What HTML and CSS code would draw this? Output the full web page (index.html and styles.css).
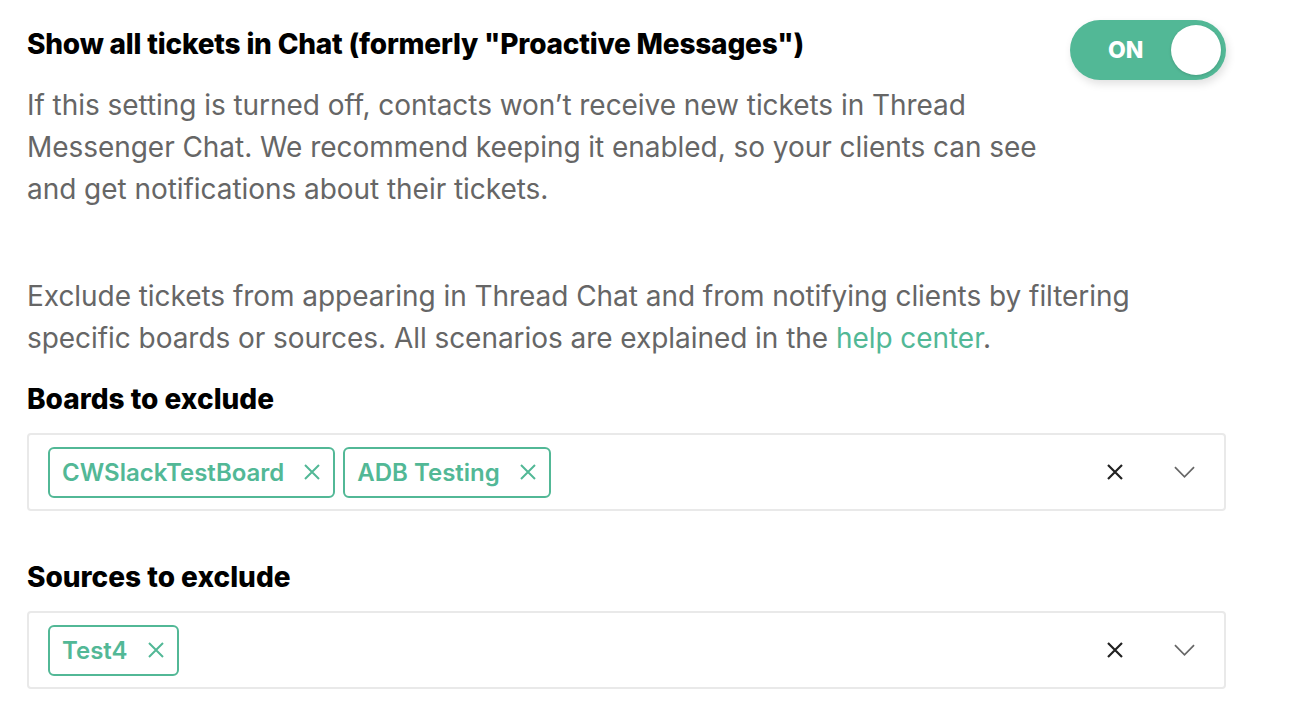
FILE: index.html
```html
<!DOCTYPE html>
<html lang="en">
<head>
    <meta charset="UTF-8" />
    <title>Chat settings</title>
    <link rel="stylesheet" href="styles.css">
</head>
<body>

<main class="settings">

    <!-- ===== Toggle row ===== -->
    <section class="setting-row">
        <div class="setting-text">
            <h3 class="setting-title">Show all tickets in Chat (formerly "Proactive Messages")</h3>
            <p class="setting-desc">If this setting is turned off, contacts won’t receive new tickets in Thread Messenger Chat. We recommend keeping it enabled, so your clients can see and get notifications about their tickets.</p>
        </div>
        <button class="toggle is-on" aria-pressed="true">
            <span class="toggle-label">ON</span>
            <span class="toggle-knob"></span>
        </button>
    </section>

    <!-- ===== Filters ===== -->
    <p class="setting-desc filter-intro">Exclude tickets from appearing in Thread Chat and from notifying clients by filtering specific boards or sources. All scenarios are explained in the <a href="#" class="link">help center</a>.</p>

    <div class="field">
        <label class="field-label">Boards to exclude</label>
        <div class="multi-select">
            <div class="tags">
                <span class="tag">CWSlackTestBoard
                    <svg class="tag-x" viewBox="0 0 18 18"><path d="M2 2 L16 16 M16 2 L2 16"/></svg>
                </span>
                <span class="tag">ADB Testing
                    <svg class="tag-x" viewBox="0 0 18 18"><path d="M2 2 L16 16 M16 2 L2 16"/></svg>
                </span>
            </div>
            <div class="select-actions">
                <svg class="clear-x" viewBox="0 0 18 18"><path d="M2 2 L16 16 M16 2 L2 16"/></svg>
                <svg class="chevron" viewBox="0 0 22 12"><path d="M1 1 L11 11 L21 1"/></svg>
            </div>
        </div>
    </div>

    <div class="field">
        <label class="field-label">Sources to exclude</label>
        <div class="multi-select">
            <div class="tags">
                <span class="tag">Test4
                    <svg class="tag-x" viewBox="0 0 18 18"><path d="M2 2 L16 16 M16 2 L2 16"/></svg>
                </span>
            </div>
            <div class="select-actions">
                <svg class="clear-x" viewBox="0 0 18 18"><path d="M2 2 L16 16 M16 2 L2 16"/></svg>
                <svg class="chevron" viewBox="0 0 22 12"><path d="M1 1 L11 11 L21 1"/></svg>
            </div>
        </div>
    </div>

</main>

</body>
</html>
```

FILE: styles.css
```css
:root {
    --green: #52b896;
    --text: #666;
    --border: #e9e9e9;
}
* { box-sizing: border-box; }

body {
    margin: 0;
    background: #fff;
    font-family: Inter, "Noto Sans", sans-serif;
    color: #000;
}

.settings {
    width: 1199px;
    margin-left: 27px;
    padding-top: 26px;
}

/* ────────── Toggle row ────────── */
.setting-row {
    display: flex;
    justify-content: space-between;
    align-items: flex-start;
}
.setting-text {
    width: 1043px;
}
.setting-title {
    margin: 0;
    font-size: 28px;
    line-height: 36px;
    font-weight: 800;
    letter-spacing: -0.2px;
}
.setting-desc {
    margin: 22px 0 0;
    font-size: 28px;
    line-height: 42px;
    color: var(--text);
    letter-spacing: -0.05px;
}
.link {
    color: var(--green);
    text-decoration: none;
}

.toggle {
    position: relative;
    margin-top: -6px;
    width: 156px;
    height: 60px;
    border: none;
    border-radius: 30px;
    background: var(--green);
    box-shadow: 2px 4px 8px rgba(0,0,0,.12);
    padding: 0;
    cursor: pointer;
    display: flex;
    align-items: center;
}
.toggle-label {
    margin-left: 38px;
    color: #fff;
    font-family: Inter, sans-serif;
    font-size: 23px;
    font-weight: 800;
}
.toggle-knob {
    position: absolute;
    right: 5px;
    top: 5px;
    width: 50px;
    height: 50px;
    border-radius: 50%;
    background: #fff;
    box-shadow: 0 1px 3px rgba(0,0,0,.15);
}

/* ────────── Filters ────────── */
.filter-intro {
    margin-top: 65px;
}

.field {
    margin-top: 22px;
}
.field + .field {
    margin-top: 48px;
}
.field-label {
    display: block;
    font-size: 28px;
    line-height: 36px;
    font-weight: 800;
    margin-bottom: 16px;
}

.multi-select {
    display: flex;
    align-items: center;
    justify-content: space-between;
    height: 78px;
    border: 2px solid var(--border);
    border-radius: 4px;
    padding: 0 19px;
}
.tags {
    display: flex;
    gap: 8px;
}
.tag {
    display: inline-flex;
    align-items: center;
    height: 51px;
    padding: 0 12px;
    border: 2px solid var(--green);
    border-radius: 6px;
    color: var(--green);
    font-size: 24px;
    font-weight: 600;
}
.tag-x {
    width: 18px;
    height: 18px;
    margin-left: 19px;
    fill: none;
    stroke: var(--green);
    stroke-width: 2;
}

.select-actions {
    display: flex;
    align-items: center;
    gap: 50px;
    margin-right: 10px;
}
.clear-x {
    width: 18px;
    height: 18px;
    fill: none;
    stroke: #222;
    stroke-width: 2.2;
}
.chevron {
    width: 21px;
    height: 12px;
    fill: none;
    stroke: #666;
    stroke-width: 1.8;
}
```
